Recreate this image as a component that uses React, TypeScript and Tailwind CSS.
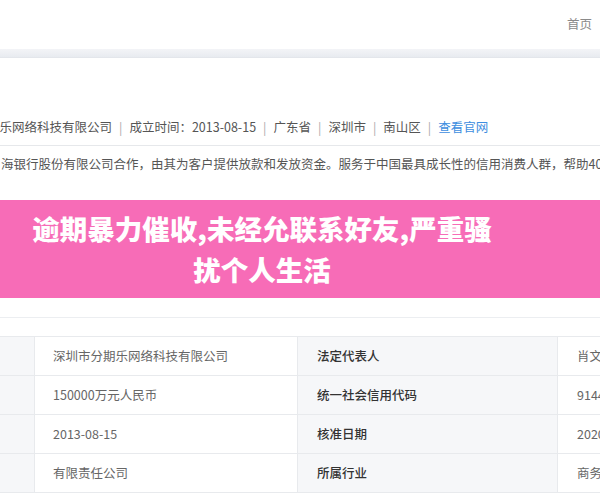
import React from "react";

const font = { fontFamily: '"Noto Sans CJK SC", "Noto Sans", sans-serif' };

const rows = [
  ["深圳市分期乐网络科技有限公司", "法定代表人", "肖文杰"],
  ["150000万元人民币", "统一社会信用代码", "91440300"],
  ["2013-08-15", "核准日期", "2020-01-01"],
  ["有限责任公司", "所属行业", "商务服务业"],
];

export default function App() {
  return (
    <div className="w-[600px] h-[500px] overflow-hidden bg-white flex flex-col" style={font}>
      <div className="h-[49px] shrink-0 flex items-center justify-end pr-[8px]">
        <span className="text-[12.5px] text-[#8a8a8a]">首页</span>
      </div>
      <div className="h-[9px] shrink-0 bg-gradient-to-b from-[#f3f4f7] to-[#e8ebf0] border-b border-[#e3e6eb]" />
      <div className="h-[52px] shrink-0" />
      <div className="h-[35px] shrink-0 flex items-center whitespace-nowrap overflow-hidden text-[12.5px] text-[#555]">
        <div className="-ml-[63px] flex items-center">
          <span>深圳市分期乐网络科技有限公司</span>
          <span className="mx-[7px] text-[#aaa]">|</span>
          <span>成立时间：2013-08-15</span>
          <span className="mx-[7px] text-[#aaa]">|</span>
          <span>广东省</span>
          <span className="mx-[7px] text-[#aaa]">|</span>
          <span>深圳市</span>
          <span className="mx-[7px] text-[#aaa]">|</span>
          <span>南山区</span>
          <span className="mx-[7px] text-[#aaa]">|</span>
          <span className="text-[#3d8ee0]">查看官网</span>
        </div>
      </div>
      <div className="h-px shrink-0 bg-[#e6e8eb]" />
      <div className="h-[36px] shrink-0 flex items-center whitespace-nowrap overflow-hidden text-[12.5px] text-[#555]">
        <span className="ml-[1px]">海银行股份有限公司合作，由其为客户提供放款和发放资金。服务于中国最具成长性的信用消费人群，帮助400万用户</span>
      </div>
      <div className="h-[18px] shrink-0" />
      <div className="h-[98px] shrink-0 bg-[#f76cb7] flex items-center">
        <div className="ml-[12px] w-[500px] text-center text-white font-black text-[27.5px] leading-[41px] whitespace-nowrap">
          逾期暴力催收,未经允联系好友,严重骚
          <br />
          扰个人生活
        </div>
      </div>
      <div className="h-[20px] shrink-0 border-b border-[#eceef1]" />
      <div className="h-[18px] shrink-0" />
      <div className="border-t border-[#e8eaed]">
        {rows.map((r, i) => (
          <div key={i} className="h-[39px] flex border-b border-[#e8eaed] text-[12.5px] whitespace-nowrap overflow-hidden">
            <div className="w-[35px] shrink-0 bg-[#f6f7f9] border-r border-[#e8eaed]" />
            <div className="w-[262px] shrink-0 flex items-center pl-[18px] text-[#666]">{r[0]}</div>
            <div className="w-[261px] shrink-0 flex items-center pl-[19px] bg-[#f6f7f9] border-l border-r border-[#e8eaed] text-[#333] font-medium">{r[1]}</div>
            <div className="flex-1 flex items-center pl-[19px] text-[#666]">{r[2]}</div>
          </div>
        ))}
      </div>
    </div>
  );
}
